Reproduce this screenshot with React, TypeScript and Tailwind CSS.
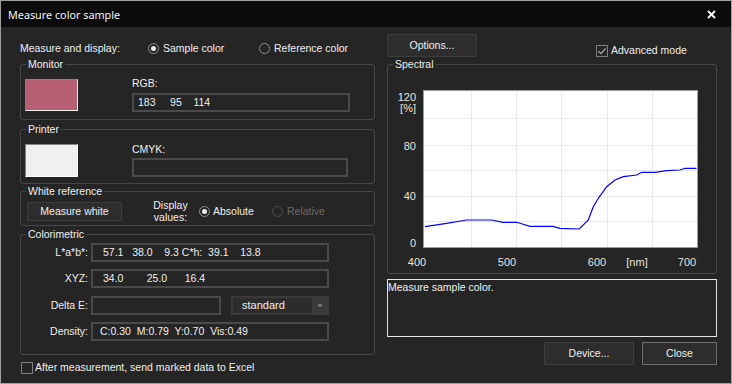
import React from 'react';

const Radio: React.FC<{ checked?: boolean; disabled?: boolean }> = ({ checked, disabled }) => (
  <span className={`w-[11px] h-[11px] rounded-full border flex items-center justify-center shrink-0 ${disabled ? 'border-[#4e4e4e]' : 'border-[#8f8f8f]'}`}>
    {checked && <span className="w-[5px] h-[5px] rounded-full bg-[#ececec]" />}
  </span>
);

const CheckBox: React.FC<{ checked?: boolean }> = ({ checked }) => (
  <span className="w-[12px] h-[12px] border border-[#7e7e7e] flex items-center justify-center shrink-0">
    {checked && (
      <svg width="10" height="10" viewBox="0 0 10 10">
        <path d="M1.5 5.2 L4 7.6 L8.6 2.4" stroke="#a8a8a8" strokeWidth="1.4" fill="none" />
      </svg>
    )}
  </span>
);

const Group: React.FC<{ title: string; className?: string; children: React.ReactNode }> = ({ title, className, children }) => (
  <fieldset className={`border border-[#474747] rounded-[3px] p-0 m-0 min-w-0 ${className ?? ''}`}>
    <legend className="ml-[5px] px-[2px] leading-[14px]">{title}</legend>
    {children}
  </fieldset>
);

const Field: React.FC<{ className?: string; children?: React.ReactNode }> = ({ className, children }) => (
  <div className={`border-2 border-[#4a4a4a] bg-[#252525] flex items-center whitespace-pre ${className ?? ''}`}>
    {children}
  </div>
);

const Button: React.FC<{ className?: string; children: React.ReactNode }> = ({ className, children }) => (
  <div className={`bg-[#2d2d2d] border flex items-center justify-center ${className ?? ''}`}>{children}</div>
);

// measured spectral curve (svg coords)
const curve = [
  [37, 155.7], [58.7, 152.3], [78.7, 149], [103.7, 149], [115, 151.3], [128.7, 151.3],
  [142, 155.3], [165, 155.3], [172, 157.3], [191.3, 158], [200.3, 149], [205.3, 135.7],
  [210.3, 127.3], [218.7, 115.7], [227, 109], [235.3, 105.7], [248.7, 104], [253.7, 101.3],
  [267, 101.3], [278.7, 99.7], [292, 99], [297, 97.3], [308.5, 97.3],
];

const SpectralChart: React.FC = () => {
  const vGrid = [83, 128, 173, 219, 264];
  const hGrid = [47, 74, 99, 125, 150];
  const labelFont = { fontFamily: '"Liberation Sans", Arial, sans-serif', fontSize: 11 };
  return (
    <svg width="328" height="202" viewBox="0 0 328 202" className="block">
      <rect x="35.5" y="19.5" width="274" height="157" fill="#ffffff" stroke="#9c9c9c" />
      {vGrid.map((x) => (
        <line key={x} x1={x + 0.5} y1="20" x2={x + 0.5} y2="176" stroke="#e9e9e9" />
      ))}
      {hGrid.map((y) => (
        <line key={y} x1="36" y1={y + 0.5} x2="309" y2={y + 0.5} stroke="#e9e9e9" />
      ))}
      <polyline points={curve.map((p) => p.join(',')).join(' ')} fill="none" stroke="#0000ff" strokeWidth="1.2" />
      <g fill="#e9e4da" style={labelFont} textAnchor="end">
        <text x="28" y="30">120</text>
        <text x="28" y="41">[%]</text>
        <text x="28" y="79">80</text>
        <text x="28" y="129">40</text>
        <text x="28" y="176">0</text>
      </g>
      <g fill="#e9e4da" style={labelFont} textAnchor="middle">
        <text x="29" y="195">400</text>
        <text x="119" y="195">500</text>
        <text x="209" y="195">600</text>
        <text x="249" y="195">[nm]</text>
        <text x="299" y="195">700</text>
      </g>
    </svg>
  );
};

export default function App() {
  return (
    <div className="w-[732px] h-[384px] bg-[#252525] border border-[#9f9f9f] flex flex-col text-[10.5px] leading-[13px] text-[#efefef] font-['Liberation_Sans',Arial,sans-serif] overflow-hidden">
      <div className="h-[26px] bg-[#0b0b0b] flex items-center justify-between pl-[7px] pr-[15px] shrink-0">
        <span className="font-['Noto_Sans',sans-serif] text-[10.8px] text-[#f2f2f2]">Measure color sample</span>
        <svg width="9" height="9" viewBox="0 0 9 9">
          <path d="M1 1 L8 8 M8 1 L1 8" stroke="#ffffff" strokeWidth="1.8" />
        </svg>
      </div>

      <div className="flex-1 flex pl-[19px]">
        {/* left column */}
        <div className="w-[355px] flex flex-col pt-[14px]">
          <div className="h-[14px] flex items-center">
            <span className="w-[128px]">Measure and display:</span>
            <span className="w-[111px] flex items-center gap-[4px]">
              <Radio checked />
              <span>Sample color</span>
            </span>
            <span className="flex items-center gap-[4px]">
              <Radio />
              <span>Reference color</span>
            </span>
          </div>

          <Group title="Monitor" className="mt-[2px] h-[63px]">
            <div className="flex items-start pl-[4px]">
              <div className="mt-[8px] w-[53px] h-[32px] bg-[#b75f72] border border-t-[#858585] border-l-[#858585] border-b-[#f2f2f2] border-r-[#f2f2f2]" />
              <div className="ml-[54px] mt-[5px] flex flex-col">
                <span className="leading-[14px]">RGB:</span>
                <Field className="mt-[3px] w-[218px] h-[19px] pl-[4px]">{'183     95    114'}</Field>
              </div>
            </div>
          </Group>

          <Group title="Printer" className="mt-[2px] h-[62px]">
            <div className="flex items-start pl-[4px]">
              <div className="mt-[8px] w-[53px] h-[33px] bg-[#f0f0f0] border border-t-[#858585] border-l-[#858585] border-b-[#ffffff] border-r-[#ffffff]" />
              <div className="ml-[54px] mt-[6px] flex flex-col">
                <span className="leading-[14px]">CMYK:</span>
                <Field className="mt-[2px] w-[216px] h-[19px]" />
              </div>
            </div>
          </Group>

          <Group title="White reference" className="h-[42px]">
            <div className="h-[26px] flex items-center">
              <Button className="ml-[6px] w-[95px] h-[19px] border-[#3d3d3d]">Measure white</Button>
              <div className="ml-[31px] w-[35px] text-center leading-[12px]">
                <div>Display</div>
                <div>values:</div>
              </div>
              <span className="ml-[11px] w-[73px] flex items-center gap-[3px]">
                <Radio checked />
                <span>Absolute</span>
              </span>
              <span className="flex items-center gap-[4px] text-[#6a6a6a]">
                <Radio disabled />
                <span>Relative</span>
              </span>
            </div>
          </Group>

          <Group title="Colorimetric" className="mt-[1px] h-[128px]">
            <div className="flex flex-col">
              <div className="mt-[2px] h-[19px] flex items-center">
                <span className="w-[67px] text-right">L*a*b*:</span>
                <Field className="ml-[3px] w-[238px] h-[19px] pl-[10px]">{'57.1   38.0    9.3 C*h:  39.1    13.8'}</Field>
              </div>
              <div className="mt-[7px] h-[19px] flex items-center">
                <span className="w-[67px] text-right">XYZ:</span>
                <Field className="ml-[3px] w-[238px] h-[19px] pl-[10px]">{'34.0        25.0      16.4'}</Field>
              </div>
              <div className="mt-[8px] h-[19px] flex items-center">
                <span className="w-[67px] text-right">Delta E:</span>
                <Field className="ml-[3px] w-[130px] h-[19px]" />
                <div className="ml-[10px] w-[98px] h-[19px] bg-[#3a3a3a] flex items-center">
                  <div className="ml-[2px] w-[79px] h-[15px] bg-[#2c2c2c] flex items-center pl-[9px] text-[11px]">standard</div>
                  <svg width="17" height="19" viewBox="0 0 17 19">
                    <path d="M5.5 8.5 L10.5 8.5 L8 11 Z" fill="#9a9a9a" />
                  </svg>
                </div>
              </div>
              <div className="mt-[7px] h-[19px] flex items-center">
                <span className="w-[67px] text-right">Density:</span>
                <Field className="ml-[3px] w-[238px] h-[19px] pl-[7px]">{'C:0.30  M:0.79  Y:0.70  Vis:0.49'}</Field>
              </div>
            </div>
          </Group>

          <div className="mt-[6px] h-[13px] flex items-center pl-[1px] gap-[2px]">
            <CheckBox />
            <span>After measurement, send marked data to Excel</span>
          </div>
        </div>

        {/* right column */}
        <div className="ml-[12px] w-[330px] flex flex-col pt-[7px]">
          <div className="h-[23px] flex items-start">
            <Button className="w-[90px] h-[23px] border-[#3d3d3d]">Options...</Button>
            <span className="ml-[119px] mt-[10px] flex items-center gap-[3px]">
              <CheckBox checked />
              <span>Advanced mode</span>
            </span>
          </div>

          <Group title="Spectral" className="h-[217px]">
            <SpectralChart />
          </Group>

          <div className="mt-[5px] h-[58px] border border-[#e6e6e6] pt-[1px]">Measure sample color.</div>

          <div className="mt-[5px] flex justify-end gap-[8px]">
            <Button className="w-[90px] h-[23px] border-[#3d3d3d]">Device...</Button>
            <Button className="w-[75px] h-[23px] border-[#6f6f6f]">Close</Button>
          </div>
        </div>
      </div>
    </div>
  );
}
